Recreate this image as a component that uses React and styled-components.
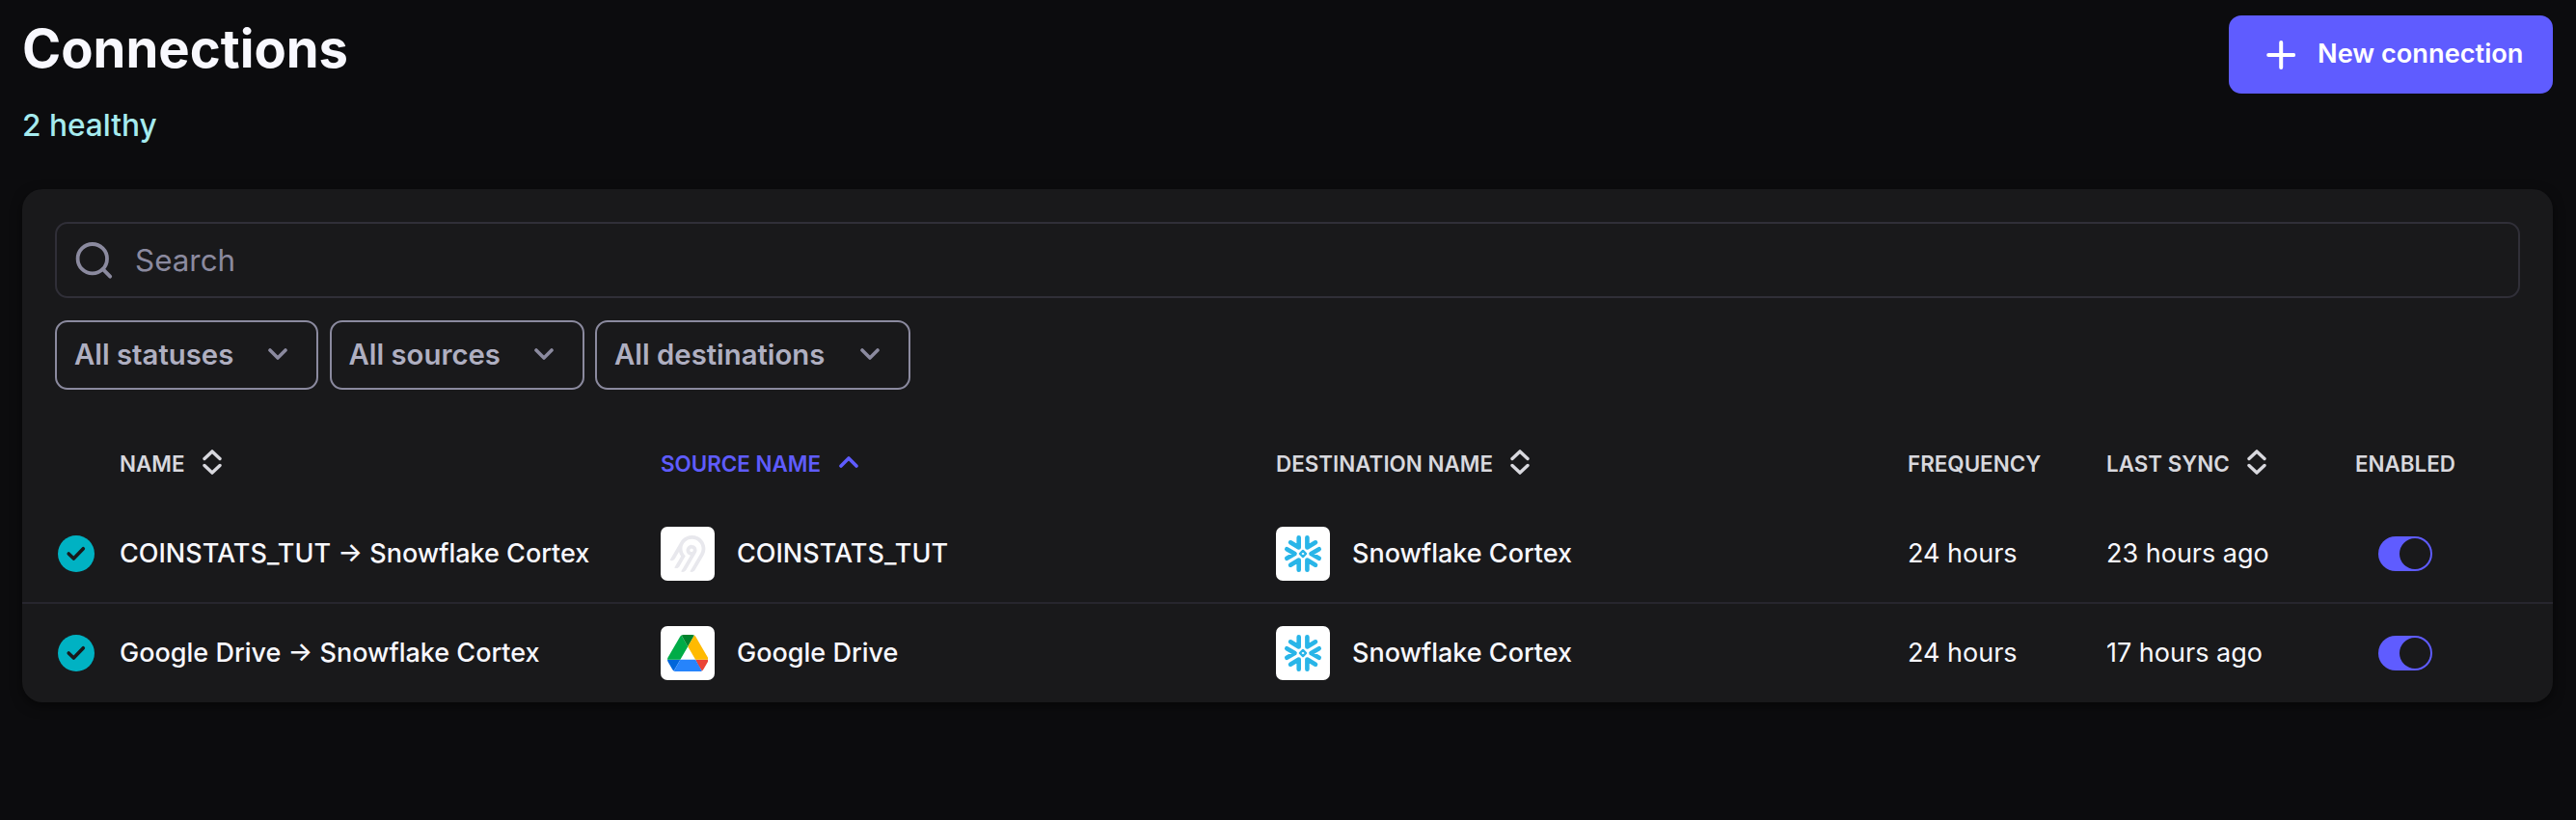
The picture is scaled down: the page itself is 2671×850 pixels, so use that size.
import styled, { createGlobalStyle } from "styled-components";
import { SiAirbyte } from "react-icons/si";

const connections = [
    { id: 1, name: "COINSTATS_TUT → Snowflake Cortex", source: "COINSTATS_TUT", sourceLogo: "airbyte", destination: "Snowflake Cortex", frequency: "24 hours", lastSync: "23 hours ago" },
    { id: 2, name: "Google Drive → Snowflake Cortex", source: "Google Drive", sourceLogo: "drive", destination: "Snowflake Cortex", frequency: "24 hours", lastSync: "17 hours ago" },
];

const filters = [
    { label: "All statuses", width: 273 },
    { label: "All sources", width: 264 },
    { label: "All destinations", width: 327 },
];

export default function App() {
    return (
        <Page>
            <GlobalStyle />
            <Header>
                <div>
                    <Title>Connections</Title>
                    <Healthy>2 healthy</Healthy>
                </div>
                <NewButton>
                    <PlusIcon />
                    <span>New connection</span>
                </NewButton>
            </Header>
            <Card>
                <SearchBox>
                    <SearchIcon />
                    <SearchInput placeholder="Search" />
                </SearchBox>
                <Filters>
                    {filters.map((filter) => (
                        <FilterButton key={filter.label} $width={filter.width}>
                            <span>{filter.label}</span>
                            <Chevron />
                        </FilterButton>
                    ))}
                </Filters>
                <HeadRow>
                    <span></span>
                    <HeadCell><span>NAME</span><SortIcon /></HeadCell>
                    <HeadCell $active><span>SOURCE NAME</span><Chevron up /></HeadCell>
                    <HeadCell><span>DESTINATION NAME</span><SortIcon /></HeadCell>
                    <HeadCell><span>FREQUENCY</span></HeadCell>
                    <HeadCell><span>LAST SYNC</span><SortIcon /></HeadCell>
                    <HeadCell><span>ENABLED</span></HeadCell>
                </HeadRow>
                {connections.map((item) => (
                    <Row key={item.id}>
                        <StatusCell><StatusIcon /></StatusCell>
                        <Cell><Name>{item.name}</Name></Cell>
                        <Cell>
                            <Logo>{item.sourceLogo === "drive" ? <DriveIcon /> : <SiAirbyte size={38} color="#e8e8ed" />}</Logo>
                            <Name>{item.source}</Name>
                        </Cell>
                        <Cell>
                            <Logo><SnowflakeIcon /></Logo>
                            <Name>{item.destination}</Name>
                        </Cell>
                        <Cell><Time>{item.frequency}</Time></Cell>
                        <Cell><Time>{item.lastSync}</Time></Cell>
                        <Cell>
                            <Toggle role="switch" aria-checked="true"><Knob /></Toggle>
                        </Cell>
                    </Row>
                ))}
            </Card>
        </Page>
    )
}

function PlusIcon() {
    return (
        <svg width="30" height="30" viewBox="0 0 30 30" fill="none" stroke="currentColor" strokeWidth="4" strokeLinecap="round">
            <path d="M15.2 2v26M2.2 15h26" />
        </svg>
    )
}

function SearchIcon() {
    return (
        <svg width="40" height="40" viewBox="0 0 40 40" fill="none" stroke="#8b8a9f" strokeWidth="3.8" strokeLinecap="round">
            <circle cx="17.8" cy="18.2" r="15.2" />
            <path d="M28.8 29.1l7.4 7.6" />
        </svg>
    )
}

function Chevron({ up }) {
    return (
        <svg width="20" height="12" viewBox="0 0 20 12" fill="none" stroke="currentColor" strokeWidth="3.6" strokeLinecap="round" strokeLinejoin="round">
            <path d={up ? "M2 10l8-8 8 8" : "M2 2l8 8 8-8"} />
        </svg>
    )
}

function SortIcon() {
    return (
        <svg width="20" height="26" viewBox="0 0 20 26" fill="none" stroke="currentColor" strokeWidth="3.4" strokeLinecap="round" strokeLinejoin="round">
            <path d="M2 9.5l8-7.6 8 7.6M2 16.5l8 7.6 8-7.6" />
        </svg>
    )
}

function StatusIcon() {
    return (
        <svg width="38" height="38" viewBox="0 0 38 38" fill="none">
            <circle cx="19" cy="19" r="19" fill="#00b2c3" />
            <path d="M11.2 18.9l5.2 5.2 9.9-10.4" stroke="#19191b" strokeWidth="3.6" strokeLinecap="round" strokeLinejoin="round" />
        </svg>
    )
}

function SnowflakeIcon() {
    return (
        <svg width="56" height="56" viewBox="0 0 56 56" fill="none" stroke="#29b5e8" strokeWidth="4.6" strokeLinecap="round" strokeLinejoin="round">
            <path d="M11.3 23.2l8.2 4.8-8.2 4.8M44.7 23.2l-8.2 4.8 8.2 4.8" />
            <path d="M23.7 11.3v10.2l-8.6-5.2M32.4 11.3v10.2l8.6-5.2" />
            <path d="M23.7 44.7v-10.2l-8.6 5.2M32.4 44.7v-10.2l8.6 5.2" />
            <path d="M28 24.9l3.1 3.1-3.1 3.1-3.1-3.1z" strokeWidth="2.4" />
        </svg>
    )
}

function DriveIcon() {
    return (
        <svg width="42.5" height="38" viewBox="0 0 87.3 78">
            <path fill="#0066da" d="m6.6 66.85 3.85 6.65c.8 1.4 1.95 2.5 3.3 3.3l13.75-23.8h-27.5c0 1.55.4 3.1 1.2 4.5z" />
            <path fill="#00ac47" d="m43.65 25-13.75-23.8c-1.35.8-2.5 1.9-3.3 3.3l-25.4 44a9.06 9.06 0 0 0 -1.2 4.5h27.5z" />
            <path fill="#ea4335" d="m73.55 76.8c1.35-.8 2.5-1.9 3.3-3.3l1.6-2.75 7.65-13.25c.8-1.4 1.2-2.95 1.2-4.5h-27.502l5.852 11.5z" />
            <path fill="#00832d" d="m43.65 25 13.75-23.8c-1.35-.8-2.9-1.2-4.5-1.2h-18.5c-1.6 0-3.15.45-4.5 1.2z" />
            <path fill="#2684fc" d="m59.8 53h-32.3l-13.75 23.8c1.35.8 2.9 1.2 4.5 1.2h50.8c1.6 0 3.15-.45 4.5-1.2z" />
            <path fill="#ffba00" d="m73.4 26.5-12.7-22c-.8-1.4-1.95-2.5-3.3-3.3l-13.75 23.8 16.15 28h27.45c0-1.55-.4-3.1-1.2-4.5z" />
        </svg>
    )
}

const GlobalStyle = createGlobalStyle`
    * {
        box-sizing: border-box;
    }
    body {
        margin: 0;
        background-color: #0c0c0e;
        font-family: "Inter", sans-serif;
        color: #f8f8fe;
    }
    button, input {
        font-family: inherit;
    }
    svg {
        flex-shrink: 0;
    }
`
const Page = styled.div`
    min-height: 850px;
    padding: 16px 24px 0 23px;
`
const Header = styled.div`
    display: flex;
    justify-content: space-between;
    align-items: flex-start;
    height: 180px;
`
const Title = styled.h1`
    margin: 0;
    font-size: 54.4px;
    line-height: 69px;
    font-weight: 700;
`
const Healthy = styled.p`
    margin: 25px 0 0;
    font-size: 31.6px;
    line-height: 40px;
    font-weight: 500;
    color: #a6ebee;
`
const NewButton = styled.button`
    display: flex;
    align-items: center;
    gap: 23px;
    width: 336px;
    height: 81px;
    padding: 0 0 0 39px;
    border: none;
    border-radius: 13px;
    background-color: #5f5cff;
    color: #ffffff;
    font-size: 27.2px;
    font-weight: 600;
    white-space: nowrap;
    span {
        padding-bottom: 3px;
    }
`
const Card = styled.div`
    height: 532px;
    padding-top: 34px;
    border-radius: 21px;
    background-color: #19191b;
    box-shadow: 0 4px 12px rgba(0, 0, 0, 0.5);
`
const SearchBox = styled.div`
    display: flex;
    align-items: center;
    gap: 22px;
    height: 79px;
    margin: 0 34px;
    padding-left: 19px;
    border: 2px solid #302f38;
    border-radius: 13px;
`
const SearchInput = styled.input`
    flex: 1;
    padding: 0;
    border: none;
    outline: none;
    background: transparent;
    font-size: 31.4px;
    color: #f8f8fe;
    &::placeholder {
        color: #8b8a9f;
    }
`
const Filters = styled.div`
    display: flex;
    gap: 11.5px;
    margin: 23px 34px 0;
`
const FilterButton = styled.button`
    display: flex;
    align-items: center;
    justify-content: space-between;
    width: ${({ $width }) => $width}px;
    height: 72px;
    padding: 0 30px 0 18px;
    border: 2px solid #8b8a9f;
    border-radius: 13px;
    background: transparent;
    font-size: 29.3px;
    font-weight: 600;
    color: #8b8a9f;
    span {
        padding-bottom: 1px;
        color: #afafc1;
    }
    svg {
        margin-bottom: 2px;
    }
`
const GridRow = styled.div`
    display: grid;
    grid-template-columns: 101px 561px 638px 655px 206px 258px 1fr;
    align-items: center;
`
const HeadRow = styled(GridRow)`
    height: 120px;
    padding-top: 30px;
`
const HeadCell = styled.div`
    display: flex;
    align-items: center;
    gap: 18.5px;
    font-size: 22.4px;
    font-weight: 600;
    color: ${({ $active }) => ($active ? "#5f5cff" : "#d8d8de")};
    span {
        padding-top: 3px;
    }
`
const Row = styled(GridRow)`
    height: 102px;
    border-bottom: 2px solid #27262e;
    &:last-child {
        border-bottom: none;
    }
`
const StatusCell = styled.div`
    display: flex;
    padding-left: 37px;
`
const Cell = styled.div`
    display: flex;
    align-items: center;
    white-space: nowrap;
`
const Name = styled.span`
    padding-bottom: 1px;
    font-size: 27px;
    font-weight: 500;
`
const Time = styled.span`
    padding-bottom: 1px;
    font-size: 27px;
`
const Logo = styled.div`
    display: flex;
    align-items: center;
    justify-content: center;
    width: 56px;
    height: 56px;
    margin-right: 23px;
    border-radius: 7px;
    background-color: #ffffff;
`
const Toggle = styled.div`
    display: flex;
    justify-content: flex-end;
    width: 56px;
    height: 36px;
    margin-left: 24px;
    padding: 2px;
    border-radius: 18px;
    background-color: #5f5cff;
`
const Knob = styled.div`
    width: 32px;
    height: 32px;
    border-radius: 50%;
    background-color: #19191b;
`
